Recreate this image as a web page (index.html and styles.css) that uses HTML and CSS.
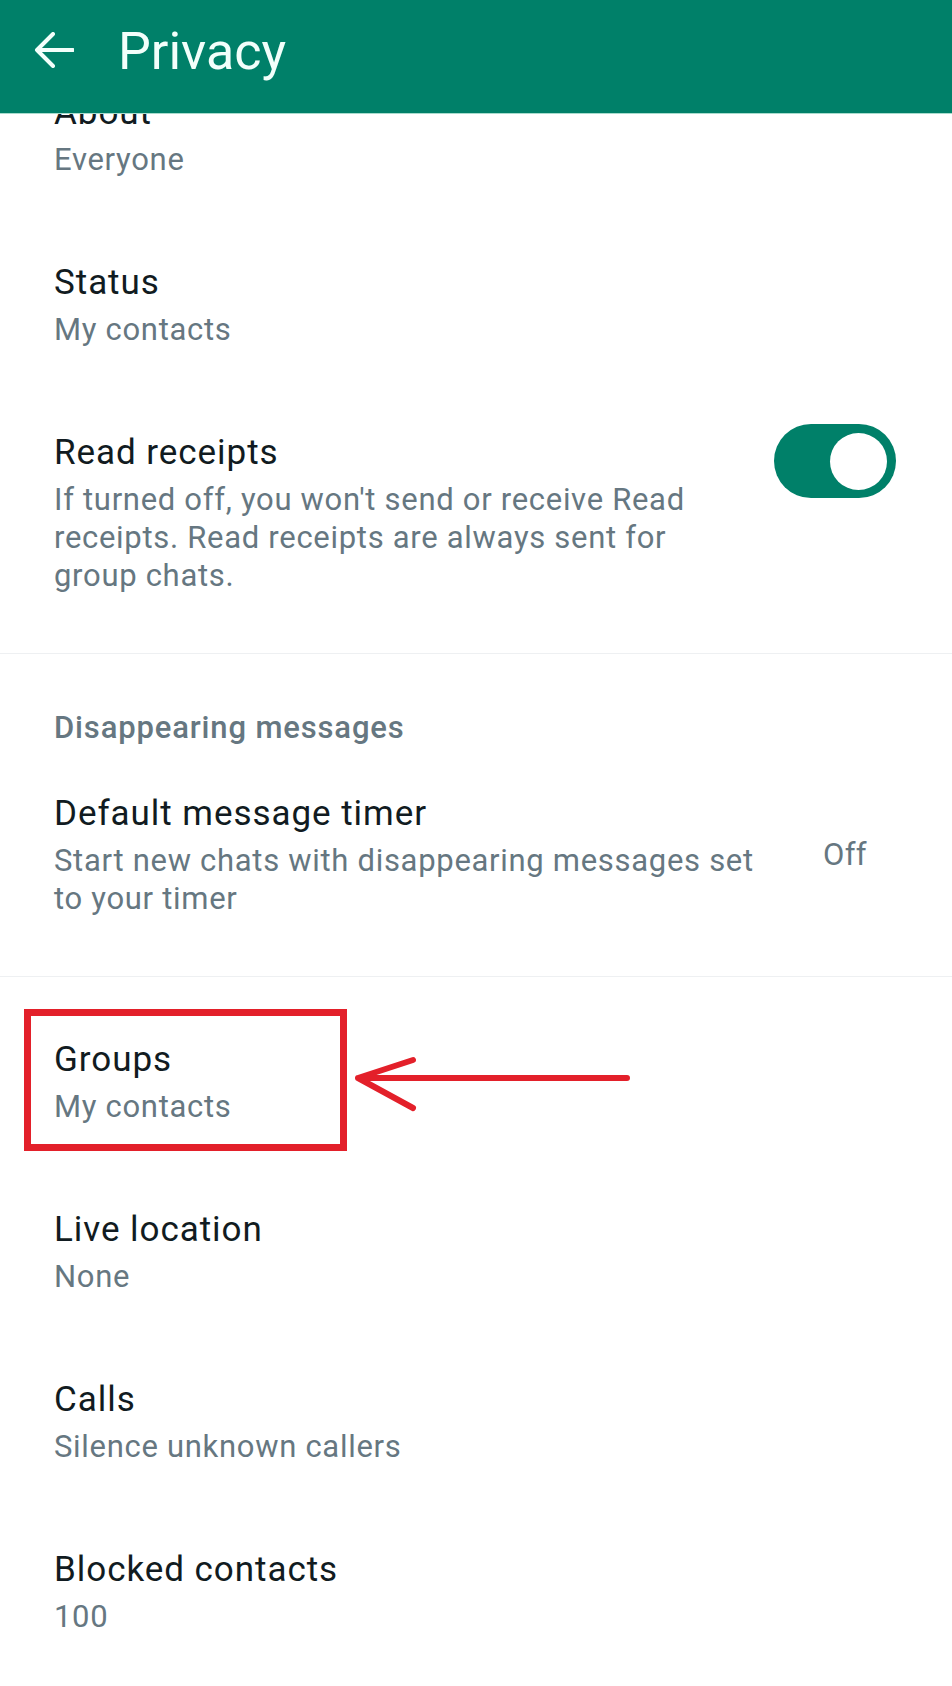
FILE: index.html
```html
<!DOCTYPE html>
<html lang="en">
<head>
  <meta charset="UTF-8">
  <meta name="viewport" content="width=device-width, initial-scale=1.0">
  <title>Privacy</title>
  <link rel="stylesheet" href="styles.css">
</head>
<body>
  <header class="appbar">
    <svg class="back" width="40" height="36" viewBox="0 0 40 36">
      <path d="M3 18H39M19 2L3 18L19 34" fill="none" stroke="#f2fffb" stroke-width="4" stroke-linecap="round" stroke-linejoin="round"/>
    </svg>
    <h1 class="appbar-title">Privacy</h1>
  </header>

  <main class="settings">
    <section class="group">
      <div class="row">
        <div class="row-text">
          <div class="row-title">About</div>
          <div class="row-sub">Everyone</div>
        </div>
      </div>
      <div class="row">
        <div class="row-text">
          <div class="row-title">Status</div>
          <div class="row-sub">My contacts</div>
        </div>
      </div>
      <div class="row row-top">
        <div class="row-text">
          <div class="row-title">Read receipts</div>
          <div class="row-sub">If turned off, you won't send or receive Read receipts. Read receipts are always sent for group chats.</div>
        </div>
        <div class="switch on"><span class="knob"></span></div>
      </div>
    </section>

    <section class="group">
      <h3 class="group-title">Disappearing messages</h3>
      <div class="row">
        <div class="row-text">
          <div class="row-title">Default message timer</div>
          <div class="row-sub">Start new chats with disappearing messages set to your timer</div>
        </div>
        <div class="row-value">Off</div>
      </div>
    </section>

    <section class="group group-last">
      <div class="row marked">
        <div class="row-text">
          <div class="row-title">Groups</div>
          <div class="row-sub">My contacts</div>
        </div>
        <span class="mark-box"></span>
        <svg class="mark-arrow" width="290" height="66" viewBox="0 0 290 66">
          <path d="M8 26H277M63 8L8 26L63 56" fill="none" stroke="#e3202a" stroke-width="6" stroke-linecap="round" stroke-linejoin="round"/>
        </svg>
      </div>
      <div class="row">
        <div class="row-text">
          <div class="row-title">Live location</div>
          <div class="row-sub">None</div>
        </div>
      </div>
      <div class="row">
        <div class="row-text">
          <div class="row-title">Calls</div>
          <div class="row-sub">Silence unknown callers</div>
        </div>
      </div>
      <div class="row">
        <div class="row-text">
          <div class="row-title">Blocked contacts</div>
          <div class="row-sub">100</div>
        </div>
      </div>
    </section>
  </main>
</body>
</html>
```

FILE: styles.css
```css
html, body {
  margin: 0;
  height: 100%;
  overflow: hidden;
  background: #fff;
  font-family: Roboto, "Noto Sans", sans-serif;
}
.appbar {
  position: fixed;
  top: 0;
  left: 0;
  right: 0;
  z-index: 2;
  height: 103px;
  padding-bottom: 10px;
  display: flex;
  align-items: center;
  background: #008069;
  border-bottom: 1px solid #a8dccd;
}
.back {
  margin-left: 34px;
  margin-bottom: 4px;
}
.appbar-title {
  margin: 0 0 0 44px;
  font-size: 52px;
  line-height: 60px;
  font-weight: 400;
  color: #f2fffb;
}
.settings {
  padding-top: 50px;
}
.group {
  padding-bottom: 17px;
  border-bottom: 1px solid #eef0f2;
}
.group-last {
  padding-top: 20px;
  border-bottom: none;
}
.group-title {
  margin: 0;
  padding: 55px 54px 4px;
  font-size: 31px;
  line-height: 38px;
  letter-spacing: 0.85px;
  font-weight: 500;
  color: #667781;
}
.row {
  display: flex;
  align-items: center;
  padding: 41px 54px;
}
.row-top {
  align-items: flex-start;
}
.row-text {
  flex: 1;
}
.row-title {
  font-size: 35px;
  line-height: 44px;
  letter-spacing: 0.95px;
  color: #111b21;
}
.row-sub {
  margin-top: 6px;
  font-size: 31px;
  line-height: 38px;
  letter-spacing: 0.7px;
  color: #667781;
}
.row-value {
  margin-left: 40px;
  margin-right: 31px;
  font-size: 31px;
  line-height: 38px;
  letter-spacing: 0.35px;
  color: #667781;
}
.switch {
  margin-left: 40px;
  margin-right: 2px;
  margin-top: -7px;
  width: 122px;
  height: 74px;
  border-radius: 37px;
  background: #cfd6da;
  display: flex;
  align-items: center;
  box-sizing: border-box;
  padding: 0 9px;
}
.switch.on {
  background: #008069;
  justify-content: flex-end;
}
.knob {
  width: 57px;
  height: 57px;
  border-radius: 50%;
  background: #fff;
}
.marked {
  position: relative;
}
.mark-box {
  position: absolute;
  left: 24px;
  top: 12px;
  width: 323px;
  height: 142px;
  box-sizing: border-box;
  border: 7px solid #e3202a;
}
.mark-arrow {
  position: absolute;
  left: 350px;
  top: 55px;
}
```
